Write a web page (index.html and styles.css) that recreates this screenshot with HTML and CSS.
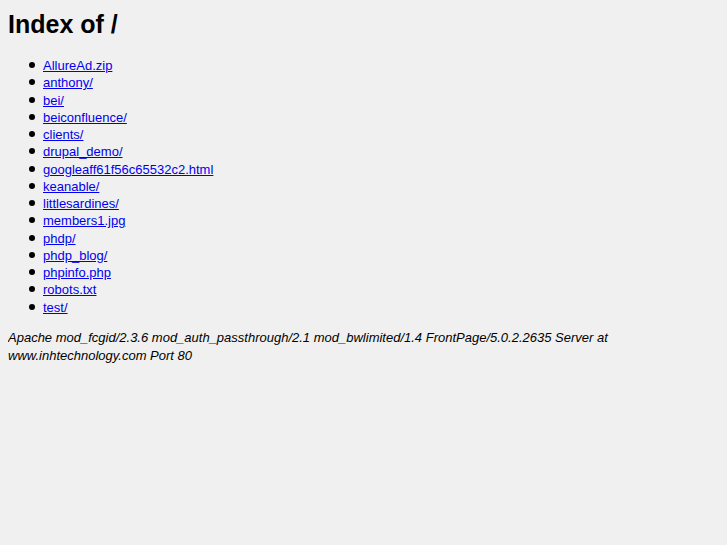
FILE: index.html
```html
<!DOCTYPE html>
<html>
<head>
<title>Index of /</title>
<link rel="stylesheet" href="styles.css">
</head>
<body>
<h1 class="title">Index of /</h1>
<ul class="listing">
<li><a href="#">AllureAd.zip</a></li>
<li><a href="#">anthony/</a></li>
<li><a href="#">bei/</a></li>
<li><a href="#">beiconfluence/</a></li>
<li><a href="#">clients/</a></li>
<li><a href="#">drupal_demo/</a></li>
<li><a href="#">googleaff61f56c65532c2.html</a></li>
<li><a href="#">keanable/</a></li>
<li><a href="#">littlesardines/</a></li>
<li><a href="#">members1.jpg</a></li>
<li><a href="#">phdp/</a></li>
<li><a href="#">phdp_blog/</a></li>
<li><a href="#">phpinfo.php</a></li>
<li><a href="#">robots.txt</a></li>
<li><a href="#">test/</a></li>
</ul>
<address class="sig">Apache mod_fcgid/2.3.6 mod_auth_passthrough/2.1 mod_bwlimited/1.4 FrontPage/5.0.2.2635 Server at www.inhtechnology.com Port 80</address>
</body>
</html>
```
FILE: styles.css
```css
html { background: #f0f0f0; }
body {
  margin: 8px;
  font-family: "Liberation Sans", Arial, sans-serif;
  font-size: 13px;
  line-height: 17.25px;
  color: #000;
}
.title {
  font-size: 25px;
  line-height: 28px;
  margin: 2px 0 19px;
}
.listing {
  margin: 0 0 13px;
  padding-left: 35px;
  list-style: none;
}
.listing li::before {
  content: "";
  display: inline-block;
  width: 6px;
  height: 6px;
  border-radius: 50%;
  background: #000;
  margin-left: -14px;
  margin-right: 8px;
  vertical-align: 2px;
}
.listing a { color: #0000ee; }
.sig {
  font-style: italic;
  line-height: 18px;
  max-width: 620px;
}
```
